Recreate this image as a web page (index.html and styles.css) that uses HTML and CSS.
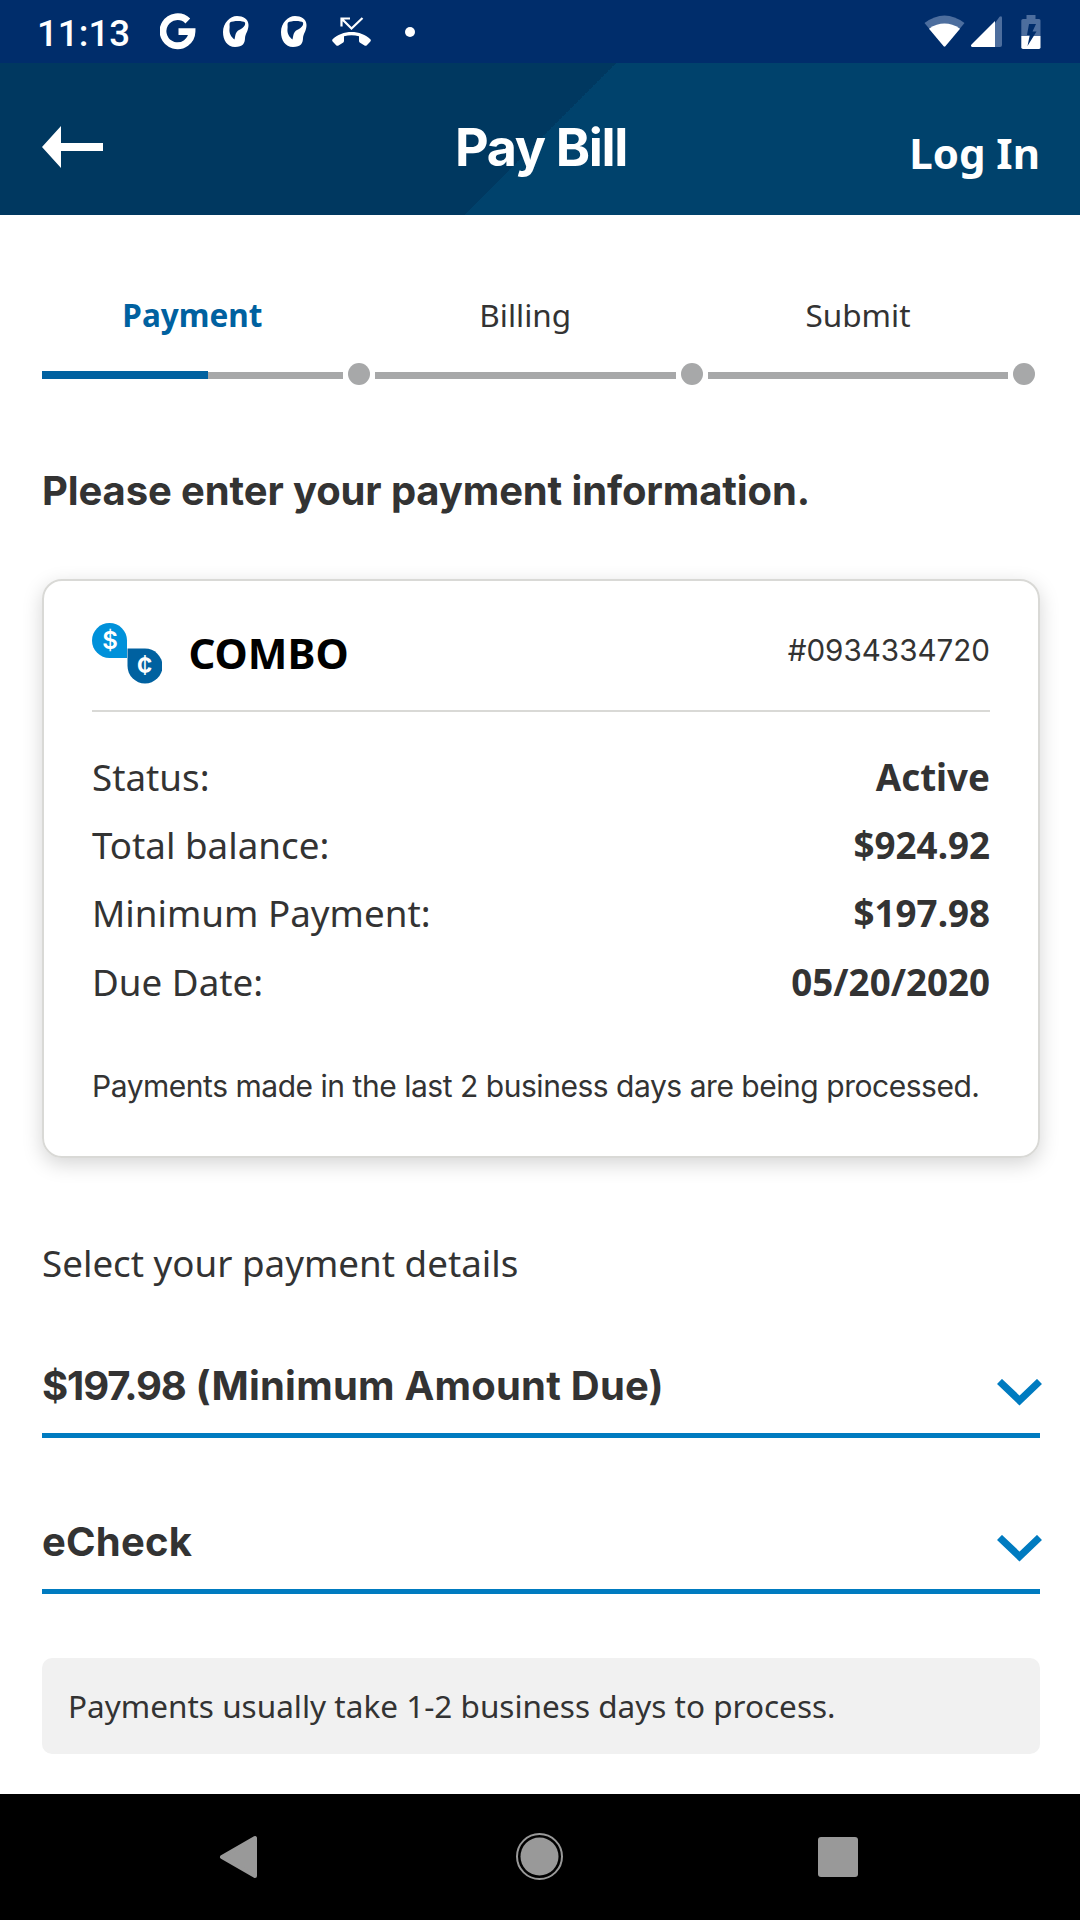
FILE: index.html
```html
<!DOCTYPE html>
<html lang="en">
<head>
<meta charset="utf-8">
<title>Pay Bill</title>
<link rel="stylesheet" href="styles.css">
</head>
<body>
<div class="status">
  <span class="time">11:13</span>
  <svg class="s-google" width="36" height="37" viewBox="0 0 36 37"><path d="M27.800 8A14.500 14.500 0 1 0 32 18.600H18.500" fill="none" stroke="#fff" stroke-width="6.800"/></svg>
  <svg class="s-leaf" width="26" height="31" viewBox="0 0 26 31"><path fill="#fff" fill-rule="evenodd" d="M14 0C20 0 25.500 3 25.500 9C25.500 15 22.500 17 22 22C22 27 20 31 12 31C4 31 0 24 0 16C0 7 7 0 14 0ZM7 6.500C10 4.500 20 4.500 22 6.500C23 10 19 12.500 16 14C12.500 16 12.500 19 11.500 23.500C8 21 6 17 6.500 13C7 10 6 8 7 6.500Z"/></svg>
  <svg class="s-leaf" width="26" height="31" viewBox="0 0 26 31"><path fill="#fff" fill-rule="evenodd" d="M14 0C20 0 25.500 3 25.500 9C25.500 15 22.500 17 22 22C22 27 20 31 12 31C4 31 0 24 0 16C0 7 7 0 14 0ZM7 6.500C10 4.500 20 4.500 22 6.500C23 10 19 12.500 16 14C12.500 16 12.500 19 11.500 23.500C8 21 6 17 6.500 13C7 10 6 8 7 6.500Z"/></svg>
  <svg class="s-missed" width="39" height="30" viewBox="0 0 39 30"><path d="M9.500 9.500V1.500H18M10 2L19.500 11.500L30.500 1" fill="none" stroke="#fff" stroke-width="2.200"/><path fill="#fff" d="M.4 22.500C10 12.500 29 12.500 38.600 22.500Q39.200 23.500 38.400 24.400L34.600 28.400Q33.600 29.200 32.500 28.500L27.700 25.400Q27 24.900 27 23.800V19.300C22 17.900 17 17.900 12 19.300V23.800Q12 24.900 11.300 25.400L6.500 28.500Q5.400 29.200 4.400 28.400L.6 24.400Q-.2 23.500 .4 22.500Z"/></svg>
  <span class="s-dot"></span>
  <span class="fill"></span>
  <svg class="s-wifi" width="41" height="32" viewBox="0 0 41 32"><path fill="#4d6e9e" d="M.5 8Q20.500-7 40.500 8L21.500 31Q20.500 32 19.500 31Z"/><path fill="#fff" d="M5 13.700Q20.500 3.500 36 13.700L21.500 31Q20.500 32 19.500 31Z"/></svg>
  <svg class="s-cell" width="31" height="31" viewBox="0 0 31 31"><path fill="#4d6e9e" d="M24 7L28.500.8Q31-.8 31 2V29Q31 31 29 31H24Z"/><path fill="#fff" d="M24 5V31H1Q-.8 30 .5 28.500Z"/></svg>
  <svg class="s-bat" width="20" height="34" viewBox="0 0 20 34"><path fill="#4d6e9e" d="M5.500 0H14.500V4H18Q19.500 4 19.500 5.500V21H.3V5.500Q.3 4 2 4H5.500Z"/><path fill="#fff" d="M.3 21H19.500V32.200Q19.500 34 18 34H2Q.3 34 .3 32.200Z"/><path fill="#002d6b" d="M8 9H15L11.500 16.500H15.500L6.500 31L8.800 20H6Z"/></svg>
</div>
<header class="header">
  <svg class="back" width="61" height="42" viewBox="0 0 61 42"><path fill="#fff" d="M0 21L19 0V17H61V25H19V42Z"/></svg>
  <h1 class="title">Pay Bill</h1>
  <a class="login">Log In</a>
</header>
<main class="main">
  <div class="steps">
    <div class="step active"><div class="label">Payment</div><div class="track"><i class="bar"></i><i class="knob"></i></div></div>
    <div class="step"><div class="label">Billing</div><div class="track"><i class="bar"></i><i class="knob"></i></div></div>
    <div class="step"><div class="label">Submit</div><div class="track"><i class="bar"></i><i class="knob"></i></div></div>
  </div>
  <h2 class="heading">Please enter your payment information.</h2>
  <section class="card">
    <div class="card-head">
      <svg width="70" height="61" viewBox="0 0 70 61"><path fill="#0091da" d="M17.500 0A17.500 17.500 0 0 1 35 17.500V35H17.500A17.500 17.500 0 0 1 17.500 0Z"/><path fill="#0061a0" d="M35.500 25.500H53A17.500 17.500 0 1 1 35.500 43Z"/><text class="coin" x="18" y="26">$</text><text class="coin cent" x="52.500" y="52">¢</text></svg>
      <span class="name">COMBO</span>
      <span class="number">#0934334720</span>
    </div>
    <dl class="rows">
      <div class="row"><dt>Status:</dt><dd>Active</dd></div>
      <div class="row"><dt>Total balance:</dt><dd>$924.92</dd></div>
      <div class="row"><dt>Minimum Payment:</dt><dd>$197.98</dd></div>
      <div class="row"><dt>Due Date:</dt><dd>05/20/2020</dd></div>
    </dl>
    <p class="card-note">Payments made in the last 2 business days are being processed.</p>
  </section>
  <p class="select">Select your payment details</p>
  <div class="field"><span><span class="amount">$197.98</span> (Minimum Amount Due)</span><svg class="chev" width="45" height="28" viewBox="0 0 45 28"><path d="M2.500 2.500L22.500 21.500L42.500 2.500" fill="none" stroke="#007bc0" stroke-width="7.200"/></svg></div>
  <div class="field second"><span>eCheck</span><svg class="chev" width="45" height="28" viewBox="0 0 45 28"><path d="M2.500 2.500L22.500 21.500L42.500 2.500" fill="none" stroke="#007bc0" stroke-width="7.200"/></svg></div>
  <div class="notice">Payments usually take 1-2 business days to process.</div>
</main>
<nav class="nav">
  <svg width="1080" height="126" viewBox="0 0 1080 126"><g fill="#999"><path stroke="#999" stroke-width="4" stroke-linejoin="round" d="M222 63L255 44V82Z"/><circle cx="539.500" cy="62.500" r="19"/><circle cx="539.500" cy="62.500" r="22.500" fill="none" stroke="#999" stroke-width="2"/><rect x="818" y="43" width="40" height="40" rx="3"/></g></svg>
</nav>
</body>
</html>
```
FILE: styles.css
```css
* { box-sizing: border-box; margin: 0; padding: 0; }
body { width: 1080px; height: 1920px; background: #fff; color: #333; font-family: "Noto Sans", sans-serif; overflow: hidden; display: flex; flex-direction: column; white-space: nowrap; }
svg { display: block; flex: none; }

.status { height: 63px; flex: none; background: #002d6b; color: #fff; display: flex; align-items: center; padding: 0 39px 0 37px; }
.time { font: 500 36.7px/36px Roboto, sans-serif; padding-top: 4px; width: 123px; }
.s-leaf { margin-left: 32px; }
.s-google + .s-leaf { margin-left: 27px; }
.s-missed { margin-left: 25px; }
.s-dot { width: 10px; height: 10px; border-radius: 50%; background: #fff; margin-left: 34px; }
.fill { flex: 1; }
.s-wifi { margin-top: -2px; }
.s-cell { margin-left: 6px; }
.s-bat { margin-left: 19px; }

.header { height: 152px; flex: none; padding: 16px 40px 0 42px; color: #fff; display: grid; grid-template-columns: 1fr auto 1fr; align-items: center; background: linear-gradient(135deg, #003860 0 50%, #00426c 50%); }
.title { font: 700 52px/64px Inter, sans-serif; letter-spacing: -1.35px; margin-top: 2px; }
.login { justify-self: end; font-size: 42px; line-height: 56px; font-weight: 700; margin-top: 12px; }

.main { flex: 1; padding: 78px 40px 0 42px; }
.steps { display: grid; grid-template-columns: repeat(3, 1fr); margin-right: -.4px; }
.label { font-size: 31.5px; line-height: 44px; text-align: center; padding-right: 32px; }
.active .label { color: #0061a0; font-weight: 700; }
.track { display: flex; align-items: center; margin-top: 22px; height: 30px; }
.bar { flex: 1; height: 7px; background: #a7a8a9; margin-top: 3px; }
.active .bar::before { content: ""; display: block; width: 166px; height: 8px; margin-top: -1px; background: #0061a0; }
.knob { width: 22px; height: 22px; border-radius: 50%; background: #a7a8a9; margin: 0 5px; }
.heading { font: 700 40px/56px Inter, sans-serif; letter-spacing: -.12px; margin-top: 74px; }

.card { margin-top: 60px; height: 579px; border: 2px solid #d9d9d6; border-radius: 20px; padding: 0 48px; box-shadow: 0 6px 20px rgba(0, 0, 0, .17); }
.card-head { height: 131px; padding-top: 15px; border-bottom: 2px solid #d9d9d6; display: flex; align-items: center; }
.coin { font: 600 24px Inter, sans-serif; fill: #fff; text-anchor: middle; }
.cent { font-size: 27px; }
.name { font-size: 42px; font-weight: 700; line-height: 56px; color: #000; margin-left: 26.5px; }
.number { font: 400 29.6px/40px Inter, sans-serif; margin: -7px 0 0 auto; }
.rows { margin-top: 31px; }
.row { display: flex; justify-content: space-between; font-size: 36.75px; line-height: 68.2px; }
.row dd { font-weight: 700; }
.card-note { font: 400 30px/44px Inter, sans-serif; letter-spacing: -.47px; margin-top: 48px; }

.select { font-size: 36.75px; line-height: 50px; margin-top: 80px; }
.field { height: 100px; margin-top: 50px; border-bottom: 5px solid #007bc0; display: flex; justify-content: space-between; align-items: center; font: 700 40px/56px Inter, sans-serif; letter-spacing: .22px; }
.amount { letter-spacing: -1.15px; }
.second { margin-top: 56px; }
.chev { margin: 14px -1.5px 0 0; }
.notice { margin-top: 64px; height: 96px; border-radius: 10px; background: #f1f1f1; padding: 0 26px 2px; display: flex; align-items: center; font-size: 31.5px; }

.nav { height: 126px; flex: none; background: #000; }
```
